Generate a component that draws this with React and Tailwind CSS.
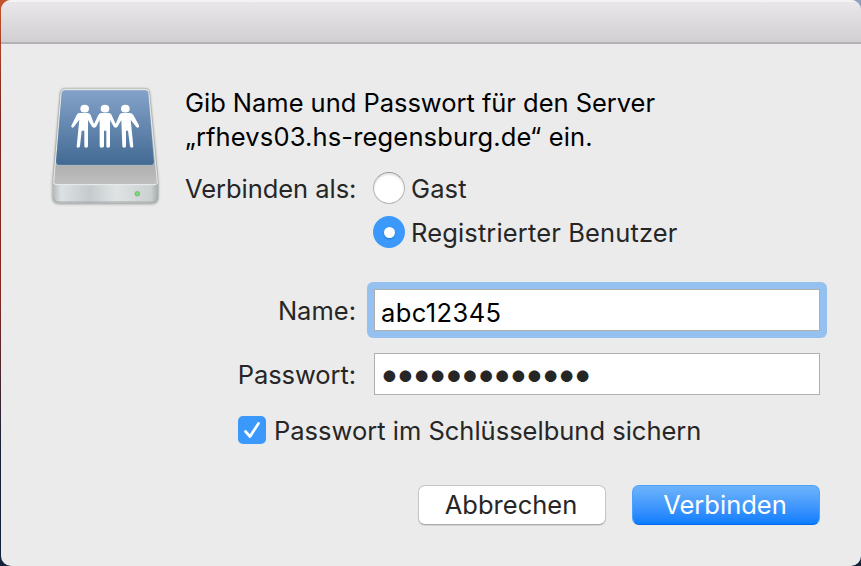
import React, { useState } from 'react';

const ServerIcon = () => (
    <svg width="130" height="140" viewBox="0 0 390 420" className="shrink-0">
        <defs>
            <linearGradient id="screen" x1="0" y1="0" x2="0" y2="1">
                <stop offset="0" stopColor="#84a2c9" />
                <stop offset="1" stopColor="#426a93" />
            </linearGradient>
            <linearGradient id="body" x1="0" y1="0" x2="0" y2="1">
                <stop offset="0" stopColor="#d3d7d6" />
                <stop offset="0.78" stopColor="#b0b0b0" />
                <stop offset="1" stopColor="#c1c1c1" />
            </linearGradient>
            <linearGradient id="front" x1="0" y1="0" x2="1" y2="0">
                <stop offset="0" stopColor="#b3b9bb" />
                <stop offset="0.08" stopColor="#dce1e3" />
                <stop offset="0.35" stopColor="#c5cbcd" />
                <stop offset="0.6" stopColor="#dfe3e4" />
                <stop offset="0.93" stopColor="#cbd0d1" />
                <stop offset="1" stopColor="#a5abad" />
            </linearGradient>
            <filter id="drop" x="-10%" y="-10%" width="120%" height="120%">
                <feGaussianBlur stdDeviation="4" />
            </filter>
        </defs>
        <path d="M38 322 L62 50 Q64 40 74 40 H316 Q326 40 328 50 L354 322 V366 Q354 383 338 383 H56 Q38 383 38 366Z" fill="#000" opacity=".4" filter="url(#drop)" />
        <path d="M38 320 L61 50 Q63 37 75 37 H315 Q327 37 329 50 L355 320 L350 332 H42Z" fill="url(#body)" stroke="#a9b0b0" strokeWidth="2" />
        <path d="M41 318 L64 51 Q66 40 75 40 H315 Q324 40 326 51 L352 318" fill="none" stroke="#e5eae8" strokeWidth="3" />
        <path d="M65 51 Q66 43 75 43 H315 Q324 43 325 51 L342 260 Q342 268 333 268 H57 Q47 268 48 259Z" fill="url(#screen)" />
        <path d="M48 259 Q47 268 57 268 H333 Q342 268 342 260" fill="none" stroke="#d3dade" strokeWidth="1.5" />
        <path d="M38 320 Q41 326 52 326 H342 Q352 326 355 320 V362 Q355 380 337 380 H56 Q38 380 38 362Z" fill="url(#front)" />
        <path d="M39 319 Q41 326 52 326 H342 Q352 326 354 319" fill="none" stroke="#edf0f0" strokeWidth="3" />
        <path d="M40 364 Q42 378 57 378 H336 Q351 378 353 364" fill="none" stroke="#a4a9aa" strokeWidth="3" />
        <circle cx="292" cy="353" r="7.5" fill="#78c776" stroke="#79a37a" strokeWidth="1" />
        <circle cx="292" cy="353" r="3.5" fill="#6ff06a" />
        <g fill="#fff">
            <ellipse cx="134" cy="98" rx="13" ry="11.5" />
            <ellipse cx="195" cy="98" rx="13" ry="11.5" />
            <ellipse cx="256" cy="98" rx="13" ry="11.5" />
            <path d="M117 111 H143 Q149 111 152 117 L162 144 L175 117 Q178 111 184 111 H206 Q212 111 215 117 L227 144 L238 117 Q241 111 247 111 H270 Q276 111 280 117 L297 148 Q299 154 294 155 Q290 156 287 151 L272 131 L280 211 Q280 215 275 215 Q271 215 270 211 L264 164 H258 V211 Q258 215 252 215 Q247 215 247 211 L244 132 L232 153 Q227 158 222 153 L210 132 V211 Q210 215 204 215 Q199 215 199 211 V164 H192 V211 Q192 215 185 215 Q179 215 179 211 V132 L168 153 Q162 158 157 153 L144 132 V211 Q144 215 138 215 Q133 215 133 211 V164 H125 L120 211 Q119 215 114 215 Q109 215 110 211 L118 131 L103 151 Q99 157 95 154 Q92 151 95 147 L110 117 Q113 111 117 111Z" />
        </g>
    </svg>
);

const Radio = ({ label, checked, onChange }) => (
    <label className="flex items-center h-[44px] gap-[6px]">
        <input type="radio" name="mode" className="sr-only" checked={checked} onChange={onChange} />
        <span
            className={`w-8 h-8 rounded-full flex items-center justify-center ${checked ? 'bg-[#3b99fc]' : 'bg-white border border-[#b5b5b5] border-t-[#999] shadow-[inset_0_2px_2px_#e4e4e4]'}`}
        >
            {checked && <span className="w-[11px] h-[11px] rounded-full bg-white shadow-[0_1px_2px_#2576ce]" />}
        </span>
        <span className="pt-[2px] tracking-[0.14px]">{label}</span>
    </label>
);

const App = () => {
    const [mode, setMode] = useState('user');
    const [name, setName] = useState('abc12345');
    const [password, setPassword] = useState('geheim1234567');
    const [save, setSave] = useState(true);

    return (
        <div className="w-[861px] h-[566px] pl-px overflow-hidden bg-[linear-gradient(#c5542c,#7d241c_20%,#8b2820_50%,#142338_80%,#13233a)]">
            <div className="w-full h-full bg-[linear-gradient(90deg,transparent_50%,#8da0bd_50%)] bg-[length:100%_40px] bg-no-repeat">
                <div className="h-full rounded-[10px] overflow-hidden flex flex-col bg-[#ebebeb] text-[#262626] font-['Inter',sans-serif] text-[25.5px] leading-[34px] whitespace-nowrap select-none">
                    {/* Title bar */}
                    <div className="h-[44px] shrink-0 bg-linear-to-b from-[#e9e7e9] to-[#d1cfd1] border-t-2 border-t-[#f4f3f4] border-b-2 border-b-[#b3b1b3]" />

                    <div className="flex pl-[39px] pt-8">
                        <ServerIcon />
                        <div className="pl-[15px] pt-[10px] w-[636px]">
                            <h1 className="text-black">
                                <span className="block tracking-[-0.03px]">Gib Name und Passwort für den Server</span>
                                <span className="block tracking-[0.15px]">„rfhevs03.hs-regensburg.de“ ein.</span>
                            </h1>
                            <div className="flex items-start pt-3">
                                <span className="w-[188px] h-[44px] flex items-center pt-[2px] tracking-[-0.05px]">Verbinden als:</span>
                                <div>
                                    <Radio label="Gast" checked={mode === 'guest'} onChange={() => setMode('guest')} />
                                    <Radio label="Registrierter Benutzer" checked={mode === 'user'} onChange={() => setMode('user')} />
                                </div>
                            </div>
                        </div>
                    </div>

                    {/* Credentials */}
                    <div className="flex flex-col pr-[41px] pt-[35px] gap-[22px]">
                        <label className="flex items-center justify-end gap-[18px]">
                            <span className="pt-[2px]">Name:</span>
                            <span className="-m-[7px] p-[7px] rounded-[6px] bg-[#95c1f1] flex">
                                <input
                                    className="w-[446px] h-[42px] bg-white border border-[#b0b0b0] px-[6px] pt-1 text-black tracking-[0.4px] outline-none"
                                    value={name}
                                    onChange={(e) => setName(e.target.value)}
                                />
                            </span>
                        </label>
                        <label className="flex items-center justify-end gap-[18px]">
                            <span className="pt-[2px] tracking-[-0.08px]">Passwort:</span>
                            <input
                                type="password"
                                className="w-[446px] h-[42px] bg-white border border-[#b0b0b0] px-1 pb-[2px] text-[37px] tracking-[-4.7px] outline-none"
                                value={password}
                                onChange={(e) => setPassword(e.target.value)}
                            />
                        </label>
                    </div>

                    <label className="flex items-center pl-[237px] pt-[17px] gap-[8px]">
                        <input type="checkbox" className="sr-only" checked={save} onChange={() => setSave(!save)} />
                        <span className="w-7 h-7 rounded-[5px] bg-[#3b99fc] flex items-center justify-center">
                            {save && (
                                <svg width="28" height="28" viewBox="0 0 28 28" fill="none" stroke="#fff" strokeWidth="2.7" strokeLinecap="round" strokeLinejoin="round">
                                    <path d="M7.5 15.5 L12 20.5 L20.5 7.5" />
                                </svg>
                            )}
                        </span>
                        <span className="pt-[2px]">Passwort im Schlüsselbund sichern</span>
                    </label>

                    {/* Actions */}
                    <div className="flex justify-end gap-[26px] pr-[41px] pt-[37px]">
                        <button className="w-[188px] h-[40px] pr-[2px] rounded-[7px] bg-white border border-[#c6c6c6] border-b-[#aaa] shadow-[0_1px_1px_#d2d2d2]">Abbrechen</button>
                        <button className="w-[188px] h-[40px] pr-[2px] rounded-[7px] text-white bg-linear-to-b from-[#6cb3fa] to-[#077dff] border border-[#4ca1f9] border-b-[#0866ec]">Verbinden</button>
                    </div>
                </div>
            </div>
        </div>
    );
};

export default App;
